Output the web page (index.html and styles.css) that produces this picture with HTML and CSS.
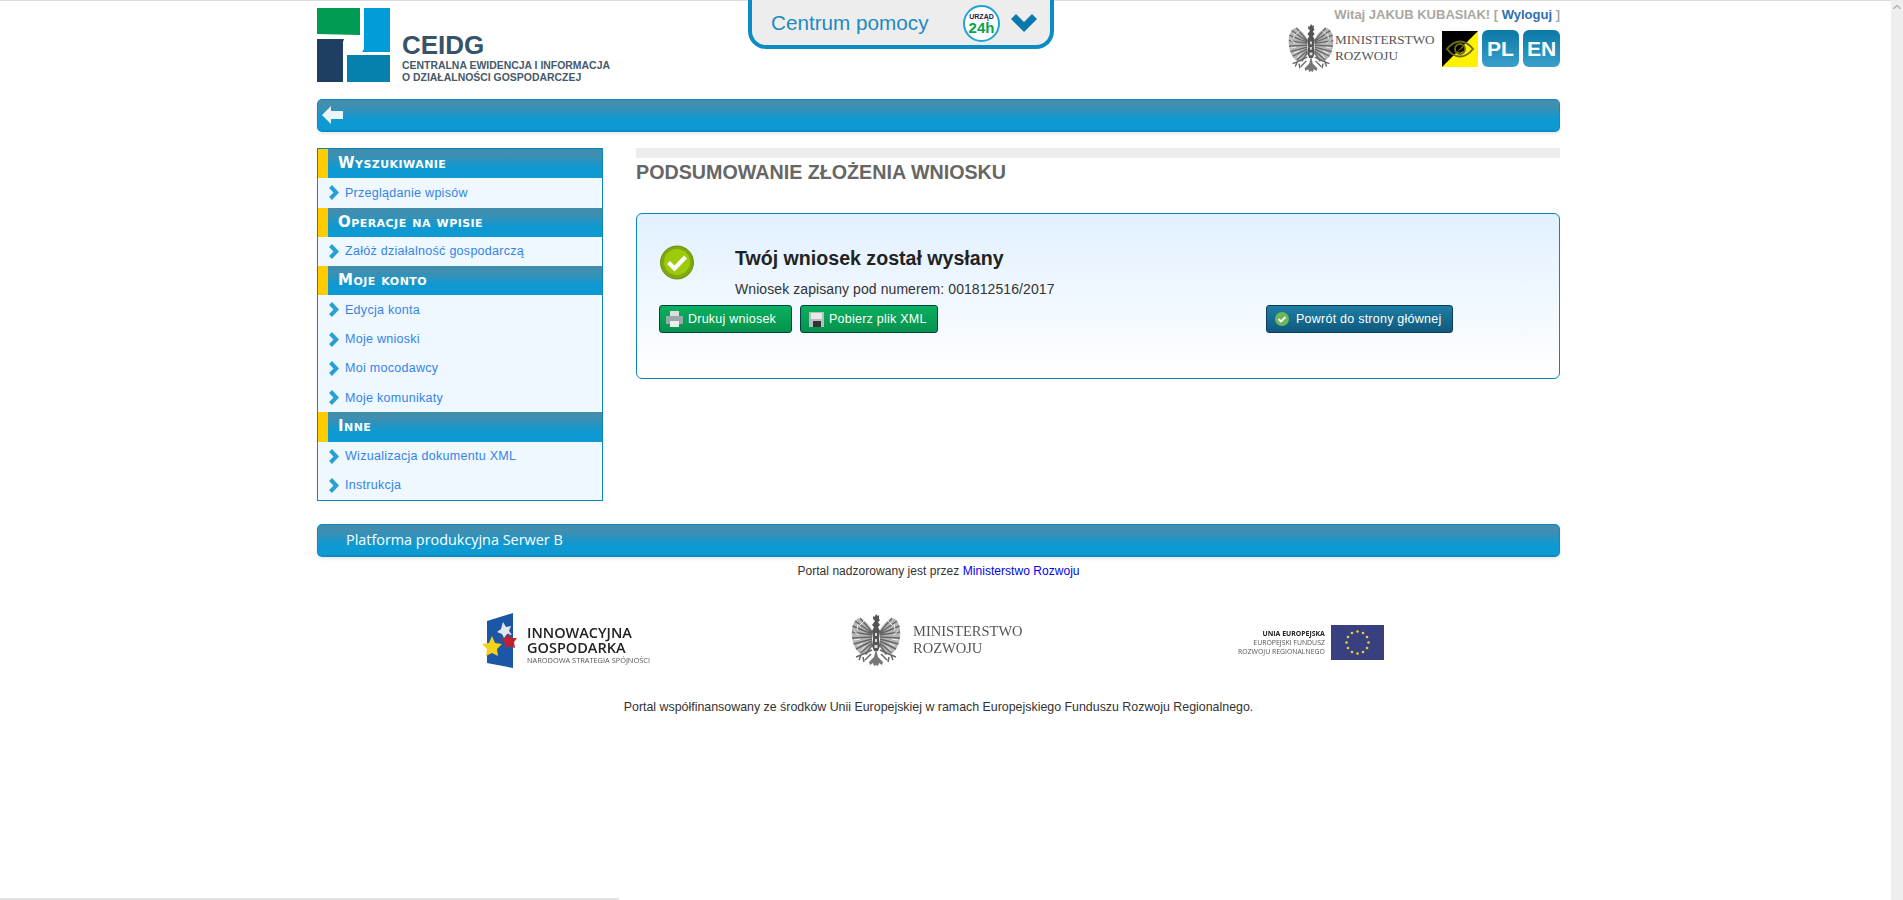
FILE: index.html
```html
<!DOCTYPE html>
<html lang="pl">
<head>
<meta charset="utf-8">
<title>CEIDG</title>
<link rel="stylesheet" href="styles.css">
</head>
<body>
<svg class="defs" width="0" height="0" aria-hidden="true">
  <defs>
    <g id="eagle-half">
      <path d="M21 17C16 8 9 4 6 6 2 9 0 16 1 24c1 8 4 14 9 17l6 1 5-8z" fill="#b5b5b5"/>
      <path d="M21 19L9 5M21 20L4 8M21 21L1.500 13M21 22L1 19M21 24L1 25M21 26L2.500 31M21 28L5 36M21 30L9.500 40M21 32L15 41" stroke="#666" stroke-width="1.400" fill="none"/>
      <path d="M13 8l-5 5M7 11l-1 6M3 18l5 4M3 27l6-1M6 33l6-3M10 38l4-5" stroke="#eee" stroke-width="1" fill="none"/>
      <path d="M21 37L10 42l-2 5M10 42l-5 2M12 44l1 5M20 41l-6 6" stroke="#666" stroke-width="1.500" fill="none"/>
      <path d="M25 36l-2 8-5 5 1 3 3-2 1 3 2-1z" fill="#777"/>
    </g>
    <g id="eagle">
      <use href="#eagle-half"/>
      <use href="#eagle-half" transform="matrix(-1 0 0 1 50 0)"/>
      <path d="M25 1l1.500 2 1.500-1v4l1 1-2 2 2 3-2 2 2 4-1 8 1 7-2 5h-4l-2-5 1-7-1-8 2-4-2-2 3-4-2-2v-3l1.500 1z" fill="#555"/>
      <path d="M24 20h2v3h-2zM24 26h2v3h-2zM23.500 32h3v3h-3z" fill="#ddd"/>
    </g>
    <path id="chev" d="M0 3l3-3 7 7.500-7 7.500-3-3 4.500-4.500z"/>
  </defs>
</svg>
<div class="page">
  <div class="wrap">
    <header class="top">
      <div class="brand">
        <svg class="logo" width="73" height="75" viewBox="0 0 73 75">
          <path d="M0 0h43v27l-2 0-41-1z" fill="#009a55"/>
          <path d="M47 0h26v44H45l2-3z" fill="#009dd9"/>
          <path d="M0 31h27l-1 3v40H0z" fill="#1f3e64"/>
          <path d="M30 47h43v27H30z" fill="#0780ad"/>
        </svg>
        <div class="brand-text">
          <div class="brand-name">CEIDG</div>
          <div class="brand-sub">CENTRALNA EWIDENCJA I INFORMACJA<br>O DZIAŁALNOŚCI GOSPODARCZEJ</div>
        </div>
      </div>
      <div class="help">
        <span class="help-label">Centrum pomocy</span>
        <span class="badge"><span class="badge-top">URZĄD</span><span class="badge-main">24h</span></span>
        <svg class="help-chev" width="26" height="18" viewBox="0 0 26 18"><path d="M0 5l5-5 8 8 8-8 5 5-13 13z" fill="#0a79ad"/></svg>
      </div>
      <div class="user">
        <div class="greeting">Witaj JAKUB KUBASIAK! [ <a class="logout" href="#">Wyloguj</a> ]</div>
        <div class="user-row">
          <div class="ministry-small">
            <svg width="46" height="50" viewBox="0 0 50 54"><use href="#eagle"/></svg>
            <div class="ministry-small-text">MINISTERSTWO<br>ROZWOJU</div>
          </div>
          <svg class="sq" width="36" height="36" viewBox="0 0 36 36">
            <path d="M0 0h36v36H0z" fill="#fff200"/>
            <path d="M0 0h36L0 36z" fill="#000"/>
            <path d="M5 18c8-10 18-10 26 0-8 10-18 10-26 0z" fill="none" stroke="#6b6b10" stroke-width="2"/>
            <circle cx="18" cy="18" r="5" fill="none" stroke="#6b6b10" stroke-width="2"/>
            <path d="M15 21l7-6v5l-4 2z" fill="#111"/>
          </svg>
          <a class="lang" href="#">PL</a>
          <a class="lang" href="#">EN</a>
        </div>
      </div>
    </header>

    <div class="bar bar-nav">
      <svg width="21" height="18" viewBox="0 0 21 18"><path d="M0 9l9-9v5h12v8H9v5z" fill="#eaf6fb"/></svg>
    </div>

    <div class="columns">
      <nav class="side">
        <div class="side-head"><span>Wyszukiwanie</span></div>
        <a class="side-item" href="#"><svg class="side-chev" width="10" height="15" viewBox="0 0 10 15"><use href="#chev"/></svg>Przeglądanie wpisów</a>
        <div class="side-head"><span>Operacje na wpisie</span></div>
        <a class="side-item" href="#"><svg class="side-chev" width="10" height="15" viewBox="0 0 10 15"><use href="#chev"/></svg>Załóż działalność gospodarczą</a>
        <div class="side-head"><span>Moje konto</span></div>
        <a class="side-item" href="#"><svg class="side-chev" width="10" height="15" viewBox="0 0 10 15"><use href="#chev"/></svg>Edycja konta</a>
        <a class="side-item" href="#"><svg class="side-chev" width="10" height="15" viewBox="0 0 10 15"><use href="#chev"/></svg>Moje wnioski</a>
        <a class="side-item" href="#"><svg class="side-chev" width="10" height="15" viewBox="0 0 10 15"><use href="#chev"/></svg>Moi mocodawcy</a>
        <a class="side-item" href="#"><svg class="side-chev" width="10" height="15" viewBox="0 0 10 15"><use href="#chev"/></svg>Moje komunikaty</a>
        <div class="side-head"><span>Inne</span></div>
        <a class="side-item" href="#"><svg class="side-chev" width="10" height="15" viewBox="0 0 10 15"><use href="#chev"/></svg>Wizualizacja dokumentu XML</a>
        <a class="side-item" href="#"><svg class="side-chev" width="10" height="15" viewBox="0 0 10 15"><use href="#chev"/></svg>Instrukcja</a>
      </nav>

      <main class="main">
        <div class="rule"></div>
        <h1 class="title">PODSUMOWANIE ZŁOŻENIA WNIOSKU</h1>
        <section class="panel">
          <div class="msg">
            <svg class="ok" width="36" height="36" viewBox="0 0 36 36">
              <circle cx="18" cy="18.500" r="16.500" fill="#7fa90f" stroke="#6c8f10" stroke-width="1"/>
              <circle cx="18" cy="18" r="13" fill="#9ccb0c"/>
              <path d="M9.500 18.500l6 6 11-11.500" fill="none" stroke="#fff" stroke-width="4.200"/>
            </svg>
            <div class="msg-text">
              <h2 class="msg-title">Twój wniosek został wysłany</h2>
              <p class="msg-sub">Wniosek zapisany pod numerem: 001812516/2017</p>
            </div>
          </div>
          <div class="actions">
            <a class="btn btn-green btn-print" href="#">
              <svg width="17" height="16" viewBox="0 0 17 16"><path d="M4 0h9v5H4z" fill="#ddd"/><path d="M0 5h17v8H0z" fill="#9aa7ad"/><path d="M4 10h9v6H4z" fill="#eee"/></svg>Drukuj wniosek</a>
            <a class="btn btn-green btn-xml" href="#">
              <svg width="15" height="15" viewBox="0 0 15 15"><path d="M0 0h15v15H0z" fill="#b8bdbd"/><path d="M2 1h11v6H2z" fill="#e8e8e8"/><path d="M4 9h8v6H4z" fill="#333"/></svg>Pobierz plik XML</a>
            <a class="btn btn-blue" href="#">
              <svg width="14" height="14" viewBox="0 0 14 14"><circle cx="7" cy="7" r="7" fill="#6cb75c"/><path d="M3.500 7l2.500 2.500 4.500-4.500" fill="none" stroke="#fff" stroke-width="1.800"/></svg>Powrót do strony głównej</a>
          </div>
        </section>
      </main>
    </div>

    <div class="bar bar-foot">Platforma produkcyjna Serwer B</div>
    <p class="note">Portal nadzorowany jest przez <a class="note-link" href="#">Ministerstwo Rozwoju</a></p>

    <div class="partners">
      <div class="partner p-ig">
        <svg width="47" height="56" viewBox="0 0 47 56">
          <path d="M10 8L36 0v55L10 50z" fill="#1c56a6"/>
          <path d="M26 9l3 5 5-1-2 5 3 4-5-1-3 4-2-4-5-2 4-3z" fill="#e4e8ee"/>
          <path d="M31 20l3 5 6 0-3 4 1 6-6-2-4 3 0-6-4-4 5-1z" fill="#c4202c"/>
          <path d="M15 23l3 7 7 1-5 5 1 7-6-3-6 3 1-7-5-5 7-1z" fill="#f4d21a"/>
        </svg>
        <div class="p-ig-text">
          <div class="p-ig-name">INNOWACYJNA<br>GOSPODARKA</div>
          <div class="p-ig-sub">NARODOWA STRATEGIA SPÓJNOŚCI</div>
        </div>
      </div>
      <div class="partner p-mr">
        <svg width="50" height="54" viewBox="0 0 50 54"><use href="#eagle"/></svg>
        <div class="p-mr-text">MINISTERSTWO<br>ROZWOJU</div>
      </div>
      <div class="partner p-eu">
        <div class="p-eu-text"><strong class="p-eu-strong">UNIA EUROPEJSKA</strong><br>EUROPEJSKI FUNDUSZ<br>ROZWOJU REGIONALNEGO</div>
        <svg width="53" height="35" viewBox="0 0 53 35">
          <path d="M0 0h53v35H0z" fill="#39407f"/>
          <g fill="#e8cf3a"><circle cx="26.500" cy="6.500" r="1.300"/><circle cx="32" cy="8" r="1.300"/><circle cx="36" cy="12" r="1.300"/><circle cx="37.500" cy="17.500" r="1.300"/><circle cx="36" cy="23" r="1.300"/><circle cx="32" cy="27" r="1.300"/><circle cx="26.500" cy="28.500" r="1.300"/><circle cx="21" cy="27" r="1.300"/><circle cx="17" cy="23" r="1.300"/><circle cx="15.500" cy="17.500" r="1.300"/><circle cx="17" cy="12" r="1.300"/><circle cx="21" cy="8" r="1.300"/></g>
        </svg>
      </div>
    </div>
    <p class="cofund">Portal współfinansowany ze środków Unii Europejskiej w ramach Europejskiego Funduszu Rozwoju Regionalnego.</p>
  </div>
  <div class="hscroll"></div>
</div>
<div class="vscroll"><svg width="8" height="4" viewBox="0 0 8 4"><path d="M0 4l4-3.500 4 3.500" fill="none" stroke="#aaa" stroke-width="1.200"/></svg></div>
</body>
</html>
```
FILE: styles.css
```css
html, body { margin: 0; padding: 0; height: 900px; overflow: hidden; background: #fff; }
body { display: flex; font-family: "Liberation Sans", Arial, sans-serif; font-size: 12px; color: #333; }
a { text-decoration: none; }
.defs { position: absolute; }
.page { flex: 1; display: flex; flex-direction: column; height: 900px; border-top: 1px solid #dedede; box-sizing: border-box; }
.wrap { width: 1243px; margin-left: 317px; flex: 1; }
.vscroll { width: 12px; background: #eee; height: 900px; display: flex; justify-content: center; padding-top: 5px; box-sizing: border-box; }
.hscroll { width: 619px; height: 2px; background: #e4e4e4; }

.top { display: flex; height: 98px; align-items: flex-start; }
.brand { display: flex; width: 431px; padding-top: 7px; }
.logo { flex: none; }
.brand-text { margin-left: 12px; padding-top: 23px; color: #3c5468; }
.brand-name { font: 700 26px/29px "Liberation Sans", sans-serif; color: #35536b; }
.brand-sub { font: 700 10.450px/12px "Liberation Sans", sans-serif; color: #46596a; }

.help { width: 298px; height: 44px; margin-top: -1px; background: #ededed; border: 4px solid #0a8cc4; border-top: 0; border-radius: 0 0 18px 18px; display: flex; align-items: center; position: relative; padding-top: 1px; }
.help-label { margin-left: 19px; width: 192px; flex: none; font-size: 20.700px; color: #1d8ac2; }
.badge { width: 33px; height: 33px; flex: none; border: 2px solid #1ea5d8; border-radius: 50%; background: #fff; display: flex; flex-direction: column; align-items: center; justify-content: center; }
.badge-top { font: 700 7px/8px "Liberation Sans", sans-serif; color: #224; }
.badge-main { font: 700 15px/13px "Liberation Sans", sans-serif; color: #0aa24c; }
.help-chev { margin-left: 11px; }

.user { margin-left: auto; display: flex; flex-direction: column; align-items: flex-end; }
.greeting { font-size: 13px; font-weight: 700; line-height: 16px; color: #aaa7a3; margin-top: 6px; }
.logout { color: #2e6fb0; }
.user-row { display: flex; align-items: flex-start; margin-top: 0; }
.ministry-small { display: flex; align-items: center; width: 154px; }
.ministry-small-text { font: 13.200px/16px "Liberation Serif", serif; color: #555; margin-left: 1px; }
.sq { margin-top: 8px; }
.lang { width: 37px; height: 37px; margin: 7px 0 0 4px; border-radius: 6px; background: linear-gradient(#0b78a6, #3aa0cb); color: #fff; font-size: 21px; font-weight: 700; display: flex; align-items: center; justify-content: center; }

.bar { box-sizing: border-box; height: 33px; border: 1px solid #0a8cc4; border-bottom-width: 2px; border-radius: 5px; background: linear-gradient(#428cab 0, #3f8fb1 20%, #0e99d1 65%, #0d9ad3 100%); box-shadow: 0 2px 3px rgba(0,0,0,.1); }
.bar-nav { display: flex; align-items: center; padding-left: 4px; }

.columns { display: flex; margin-top: 16px; height: 376px; }
.side { box-sizing: border-box; width: 286px; height: 353px; border: 1px solid #0a86bb; background: #eff7ff; display: grid; grid-auto-rows: 1fr; }
.side-head { border-left: 10px solid #ffcc00; background: linear-gradient(#428cab 0, #3f8fb1 20%, #0e99d1 65%, #0d9ad3 100%); color: #fff; display: flex; align-items: center; padding-left: 10px; font: 700 15px/1 "DejaVu Sans", sans-serif; font-variant: small-caps; letter-spacing: 0.450px; }
.side-item { display: flex; align-items: center; padding-left: 11px; color: #3384e8; font-size: 12.500px; letter-spacing: 0.280px; }
.side-chev { fill: #27a0d8; margin-right: 6px; flex: none; }

.main { margin-left: 33px; flex: 1; }
.rule { height: 10px; background: #ededed; }
.title { margin: 1px 0 0; font-size: 19.700px; line-height: 27px; color: #666; font-weight: 700; }
.panel { box-sizing: border-box; height: 166px; margin-top: 27px; border: 1px solid #0a86bb; border-radius: 6px; background: linear-gradient(#e1f0ff, #fff); padding: 30px 22px 0; }
.msg { display: flex; }
.ok { flex: none; }
.msg-text { margin-left: 40px; }
.msg-title { margin: 1px 0 0; font-size: 19.600px; line-height: 26px; color: #222; font-weight: 700; }
.msg-sub { margin: 10px 0 0; font-size: 14px; letter-spacing: 0.080px; line-height: 16px; color: #333; }
.actions { display: flex; margin-top: 8px; }
.btn { box-sizing: border-box; height: 28px; border: 1px solid #04433f; border-radius: 3px; color: #fff; font-size: 12.500px; letter-spacing: 0.240px; display: flex; align-items: center; }
.btn svg { flex: none; margin-right: 6px; }
.btn-green { background: linear-gradient(#0bb060, #04924d); }
.btn-blue { background: linear-gradient(#1e7ea4, #10597d); border-color: #0c3b5c; width: 187px; margin-left: 328px; padding-left: 8px; }
.btn-blue svg { margin-right: 7px; }
.btn-print { width: 133px; padding-left: 6px; }
.btn-print svg { margin-right: 5px; }
.btn-xml { width: 138px; margin-left: 8px; padding-left: 8px; }
.btn-xml svg { margin-right: 5px; }

.bar-foot { color: #fff; font: 14.400px/30px "Open Sans", sans-serif; padding-left: 28px; }
.note { margin: 7px 0 0; text-align: center; font-size: 12px; letter-spacing: 0.040px; line-height: 14px; color: #333; }
.note-link { color: #0000ee; }

.partners { position: relative; height: 87px; margin-top: 35px; }
.partner { position: absolute; display: flex; align-items: center; filter: blur(0.4px); }
.p-ig { left: 160px; top: 0; }
.p-ig-text { margin-left: 3px; color: #222; padding-top: 8px; }
.p-ig-name { font: 600 14.500px/15px "Open Sans", sans-serif; }
.p-ig-sub { font: 7.400px/11px "Open Sans", sans-serif; color: #555; }
.p-mr { left: 534px; top: 0; }
.p-mr-text { font: 14.500px/17px "Liberation Serif", serif; color: #555; margin-left: 12px; }
.p-eu { left: 921px; top: 12px; }
.p-eu-text { font: 6.900px/9px "Open Sans", sans-serif; text-align: right; color: #555; margin-right: 6px; }
.p-eu-strong { color: #222; font-weight: 700; }
.cofund { margin: 0; text-align: center; font-size: 12.400px; line-height: 14px; color: #333; }
```
